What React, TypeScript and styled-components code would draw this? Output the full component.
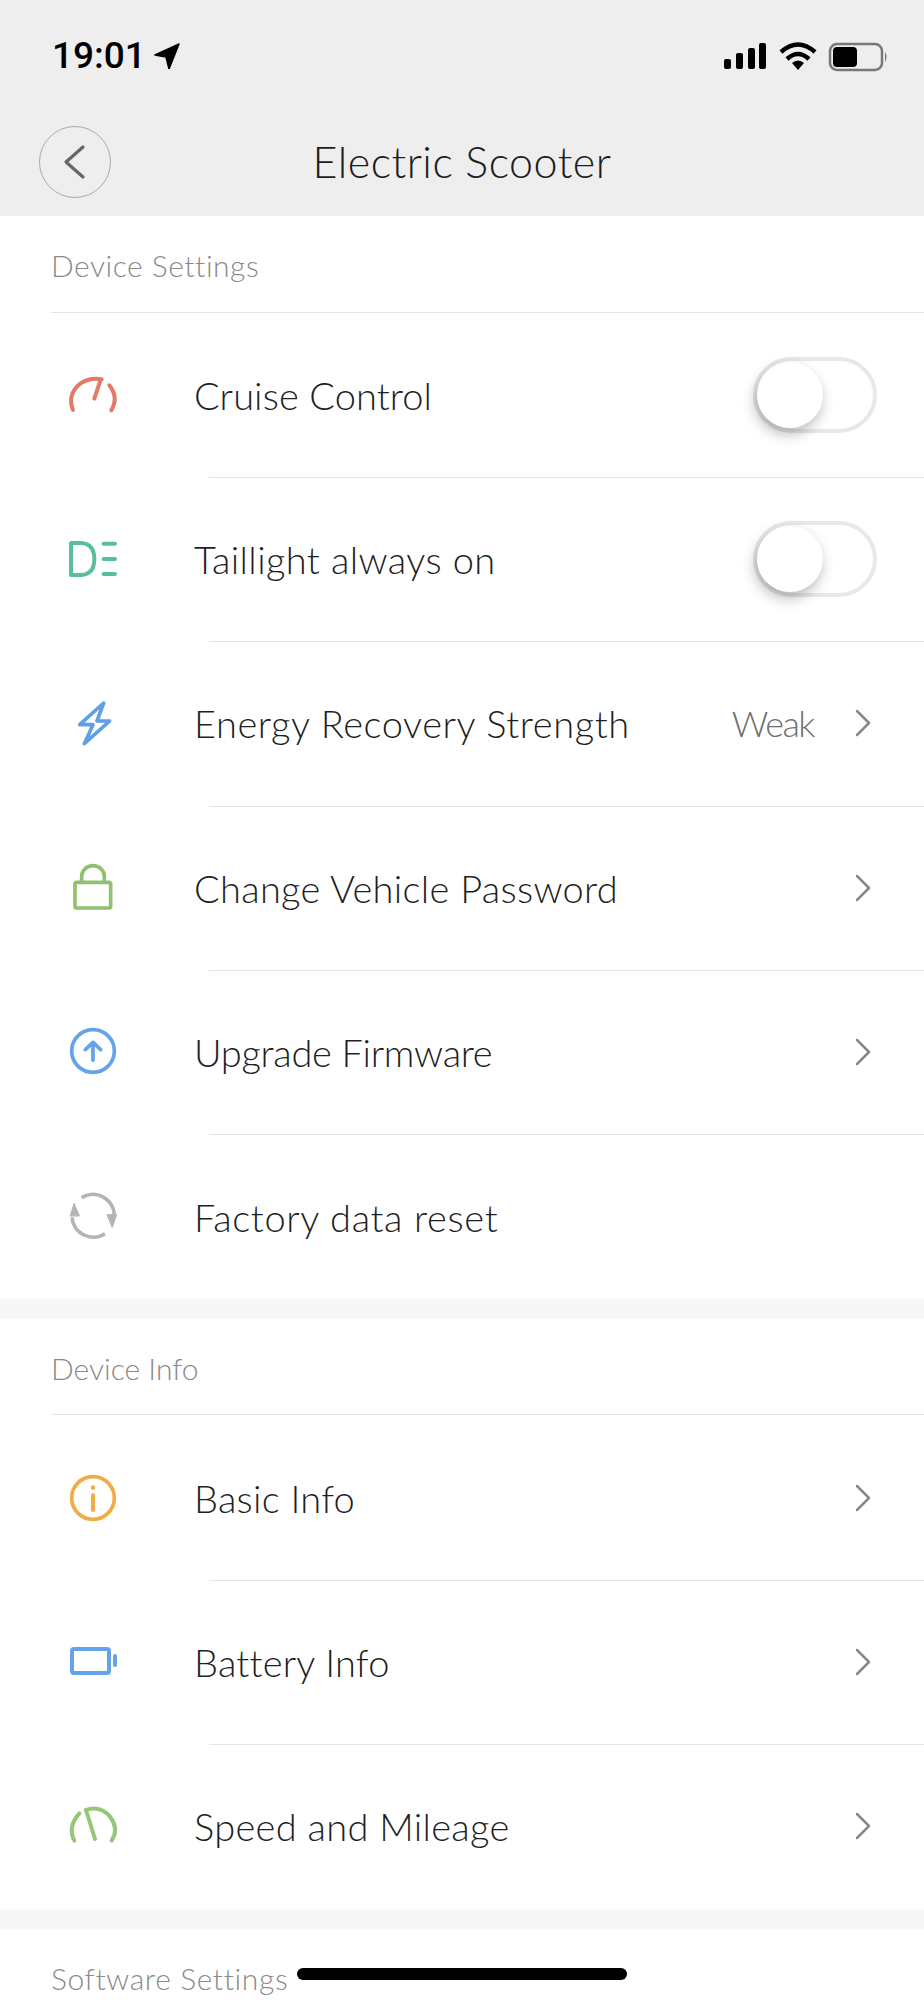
import React from "react";
import styled, { createGlobalStyle } from "styled-components";

const Global = createGlobalStyle`
  html, body { margin: 0; padding: 0; background: #fff; }
  * { box-sizing: border-box; }
`;

const Page = styled.div`
  position: relative;
  width: 924px;
  height: 2000px;
  overflow: hidden;
  background: #fff;
  font-family: "Lato", "Liberation Sans", sans-serif;
  font-weight: 300;
`;

const Header = styled.header`
  height: 216px;
  background: #eeeeee;
  display: flex;
  flex-direction: column;
`;

const StatusBar = styled.div`
  height: 126px;
  padding: 30px 24px 0 52px;
  display: flex;
  justify-content: space-between;
  align-items: flex-start;
`;

const Clock = styled.div`
  display: flex;
  align-items: center;
  gap: 8px;
  margin-top: 8px;
  font-family: "Roboto", "Liberation Sans", sans-serif;
  font-weight: 500;
  font-size: 37px;
  line-height: 36px;
  color: #000;
`;

const StatusIcons = styled.svg`
  display: block;
`;

const Nav = styled.nav`
  display: grid;
  grid-template-columns: 72px 1fr 72px;
  align-items: center;
  padding: 0 39px;
  height: 72px;
`;

const BackButton = styled.div`
  width: 72px;
  height: 72px;
  border-radius: 50%;
  border: 1px solid #aaaaaa;
  display: flex;
  align-items: center;
  justify-content: center;
`;

const Title = styled.h1`
  margin: 0 0 2px;
  text-align: center;
  font-size: 43px;
  font-weight: 300;
  letter-spacing: 0.5px;
  color: #1c1c1c;
`;

const Section = styled.section`
  border-bottom: 20px solid #f7f7f7;
`;

const SectionLabel = styled.div<{ $track?: number }>`
  height: 96.5px;
  margin-left: 51px;
  padding-top: 3px;
  display: flex;
  align-items: center;
  font-size: 30px;
  letter-spacing: ${(p) => p.$track ?? 0}px;
  color: #8a8a8a;
  border-bottom: 1px solid #e4e4e4;
`;

const Row = styled.div`
  height: 164.4px;
  display: flex;
  align-items: center;
  padding-left: 63px;
  position: relative;
  & + &::before {
    content: "";
    position: absolute;
    top: 0;
    left: 209px;
    right: 0;
    height: 1px;
    background: #e4e4e4;
  }
`;

const IconBox = styled.svg`
  width: 60px;
  height: 60px;
  flex: none;
  display: block;
  fill: none;
  stroke-linecap: round;
  stroke-linejoin: round;
`;

const RowLabel = styled.div<{ $track?: number }>`
  margin-left: 71px;
  flex: 1;
  font-size: 38px;
  letter-spacing: ${(p) => p.$track ?? 0}px;
  color: #1f1f1f;
`;

const RowValue = styled.div`
  font-size: 36px;
  letter-spacing: -1.5px;
  color: #6f6f6f;
  margin-right: 41px;
`;

const Chevron = styled.svg`
  width: 16px;
  height: 28px;
  margin-right: 53px;
  flex: none;
  fill: none;
  stroke: #888;
  stroke-width: 2.5px;
  stroke-linecap: round;
  stroke-linejoin: round;
`;

const Track = styled.div`
  width: 124px;
  height: 76px;
  margin-right: 47px;
  border: 4px solid #e8e8e8;
  border-radius: 38px;
  flex: none;
  position: relative;
`;

const Knob = styled.div`
  position: absolute;
  left: 0;
  top: 1px;
  width: 66px;
  height: 66px;
  border-radius: 50%;
  background: #fff;
  box-shadow: -2px 6px 14px rgba(0, 0, 0, 0.28);
`;

const HomeBar = styled.div`
  position: absolute;
  left: 297px;
  top: 1968px;
  width: 330px;
  height: 12px;
  border-radius: 6px;
  background: #000;
`;

const Cruise = () => (
  <IconBox viewBox="70 75 180 180" stroke="#e27a66" strokeWidth="12">
    <path d="M100 210 Q82 165 120 132 Q150 112 186 118" />
    <path d="M164 176 L181 125" />
    <path d="M209 136 Q238 172 215 211" />
  </IconBox>
);
const Taillight = () => (
  <IconBox viewBox="70 568 180 180" stroke="#57c09a" strokeWidth="12">
    <path d="M94 610 H124 Q164 612 164 658 Q164 704 124 706 H94 Z" />
    <path d="M192 612 H226 M192 658 H226 M192 703 H226" />
  </IconBox>
);
const Bolt = () => (
  <IconBox viewBox="70 1062 180 180" stroke="#5f9fe6" strokeWidth="11">
    <path d="M192 1092 L120 1157 H160 L134 1214 L210 1146 H172 Z" />
  </IconBox>
);
const Lock = () => (
  <IconBox viewBox="70 57 180 180" stroke="#8fc170" strokeWidth="11">
    <rect x="106" y="130" width="107" height="77" rx="5" />
    <path d="M126 128 V112 A34 32 0 0 1 194 112 V128" />
  </IconBox>
);
const Upgrade = () => (
  <IconBox viewBox="70 549 180 180" stroke="#64a3ea" strokeWidth="11">
    <circle cx="160" cy="636" r="64" />
    <path d="M160 664 V610 M137 632 L160 610 L183 632" />
  </IconBox>
);
const Reset = () => (
  <IconBox viewBox="9 9 180 180" stroke="#b4b4b4" strokeWidth="11">
    <path d="M65 41 A64 64 0 0 1 163 92" strokeLinecap="butt" />
    <path d="M135 149 A64 64 0 0 1 36 100" strokeLinecap="butt" />
    <path d="M31 95 L42 58 L58 95 Z" fill="#b4b4b4" strokeWidth="3" />
    <path d="M142 92 L170 92 L157 130 Z" fill="#b4b4b4" strokeWidth="3" />
  </IconBox>
);
const Info = () => (
  <IconBox viewBox="70 560 180 180" stroke="#f0ac45" strokeWidth="11">
    <circle cx="160" cy="650" r="64" />
    <path d="M160 642 V686" strokeWidth="12" />
    <path d="M160 618 V619" strokeWidth="13" />
  </IconBox>
);
const Battery = () => (
  <IconBox viewBox="0 0 60 60" stroke="#64a3ea" strokeWidth="4">
    <rect x="9" y="17" width="37" height="24" rx="2" />
    <path d="M52 24 V33" />
  </IconBox>
);
const Speed = () => (
  <IconBox viewBox="39 498 180 180" stroke="#96c678" strokeWidth="12">
    <path d="M73 632 Q52 590 88 550" />
    <path d="M108 540 Q150 525 180 560 Q208 595 185 632" />
    <path d="M108 540 L135 627" />
  </IconBox>
);

const Arrow = () => (
  <Chevron viewBox="0 0 16 28">
    <path d="M2 2 L14 14 L2 26" />
  </Chevron>
);

const Toggle = () => (
  <Track>
    <Knob />
  </Track>
);

export default function App() {
  return (
    <Page>
      <Global />
      <Header>
        <StatusBar>
          <Clock>
            19:01
            <svg width="26" height="26" viewBox="0 0 26 26">
              <path d="M1 12 L25 1 L15 26 L12 14 Z" fill="#000" stroke="#000" strokeWidth="1.5" strokeLinejoin="round" />
            </svg>
          </Clock>
          <StatusIcons width="190" height="50" viewBox="710 30 190 50">
            <g fill="#000">
              <rect x="724" y="59" width="7" height="10" rx="2" />
              <rect x="736" y="53" width="7" height="16" rx="2" />
              <rect x="748" y="48" width="7" height="21" rx="2" />
              <rect x="759" y="43" width="7" height="26" rx="2" />
            </g>
            <g fill="none" stroke="#000" strokeWidth="4.5">
              <path d="M781 52 Q798 37 815 52" />
              <path d="M787 59 Q798 49 809 59" />
            </g>
            <path d="M792 63 Q798 58 804 63 L798 70 Z" fill="#000" />
            <rect x="830" y="44" width="52" height="26" rx="7" fill="none" stroke="#777" strokeWidth="2.5" />
            <rect x="833" y="47" width="24" height="20" rx="4" fill="#000" />
            <path d="M885 52 Q888 57 885 62 Z" fill="#777" />
          </StatusIcons>
        </StatusBar>
        <Nav>
          <BackButton>
            <svg width="24" height="36" viewBox="0 0 24 36" fill="none" stroke="#666" strokeWidth="3.2" strokeLinecap="round" strokeLinejoin="round">
              <path d="M20 3 L3 18 L20 33" />
            </svg>
          </BackButton>
          <Title>Electric Scooter</Title>
        </Nav>
      </Header>
      <Section>
        <SectionLabel $track={0.5}>Device Settings</SectionLabel>
        <Row><Cruise /><RowLabel $track={0.1}>Cruise Control</RowLabel><Toggle /></Row>
        <Row><Taillight /><RowLabel $track={0.4}>Taillight always on</RowLabel><Toggle /></Row>
        <Row><Bolt /><RowLabel $track={0.58}>Energy Recovery Strength</RowLabel><RowValue>Weak</RowValue><Arrow /></Row>
        <Row><Lock /><RowLabel $track={0.3}>Change Vehicle Password</RowLabel><Arrow /></Row>
        <Row><Upgrade /><RowLabel $track={-0.3}>Upgrade Firmware</RowLabel><Arrow /></Row>
        <Row><Reset /><RowLabel $track={0.64}>Factory data reset</RowLabel></Row>
      </Section>
      <Section>
        <SectionLabel>Device Info</SectionLabel>
        <Row><Info /><RowLabel $track={0.25}>Basic Info</RowLabel><Arrow /></Row>
        <Row><Battery /><RowLabel $track={0.2}>Battery Info</RowLabel><Arrow /></Row>
        <Row><Speed /><RowLabel $track={0.3}>Speed and Mileage</RowLabel><Arrow /></Row>
      </Section>
      <Section>
        <SectionLabel $track={0.6}>Software Settings</SectionLabel>
      </Section>
      <HomeBar />
    </Page>
  );
}
